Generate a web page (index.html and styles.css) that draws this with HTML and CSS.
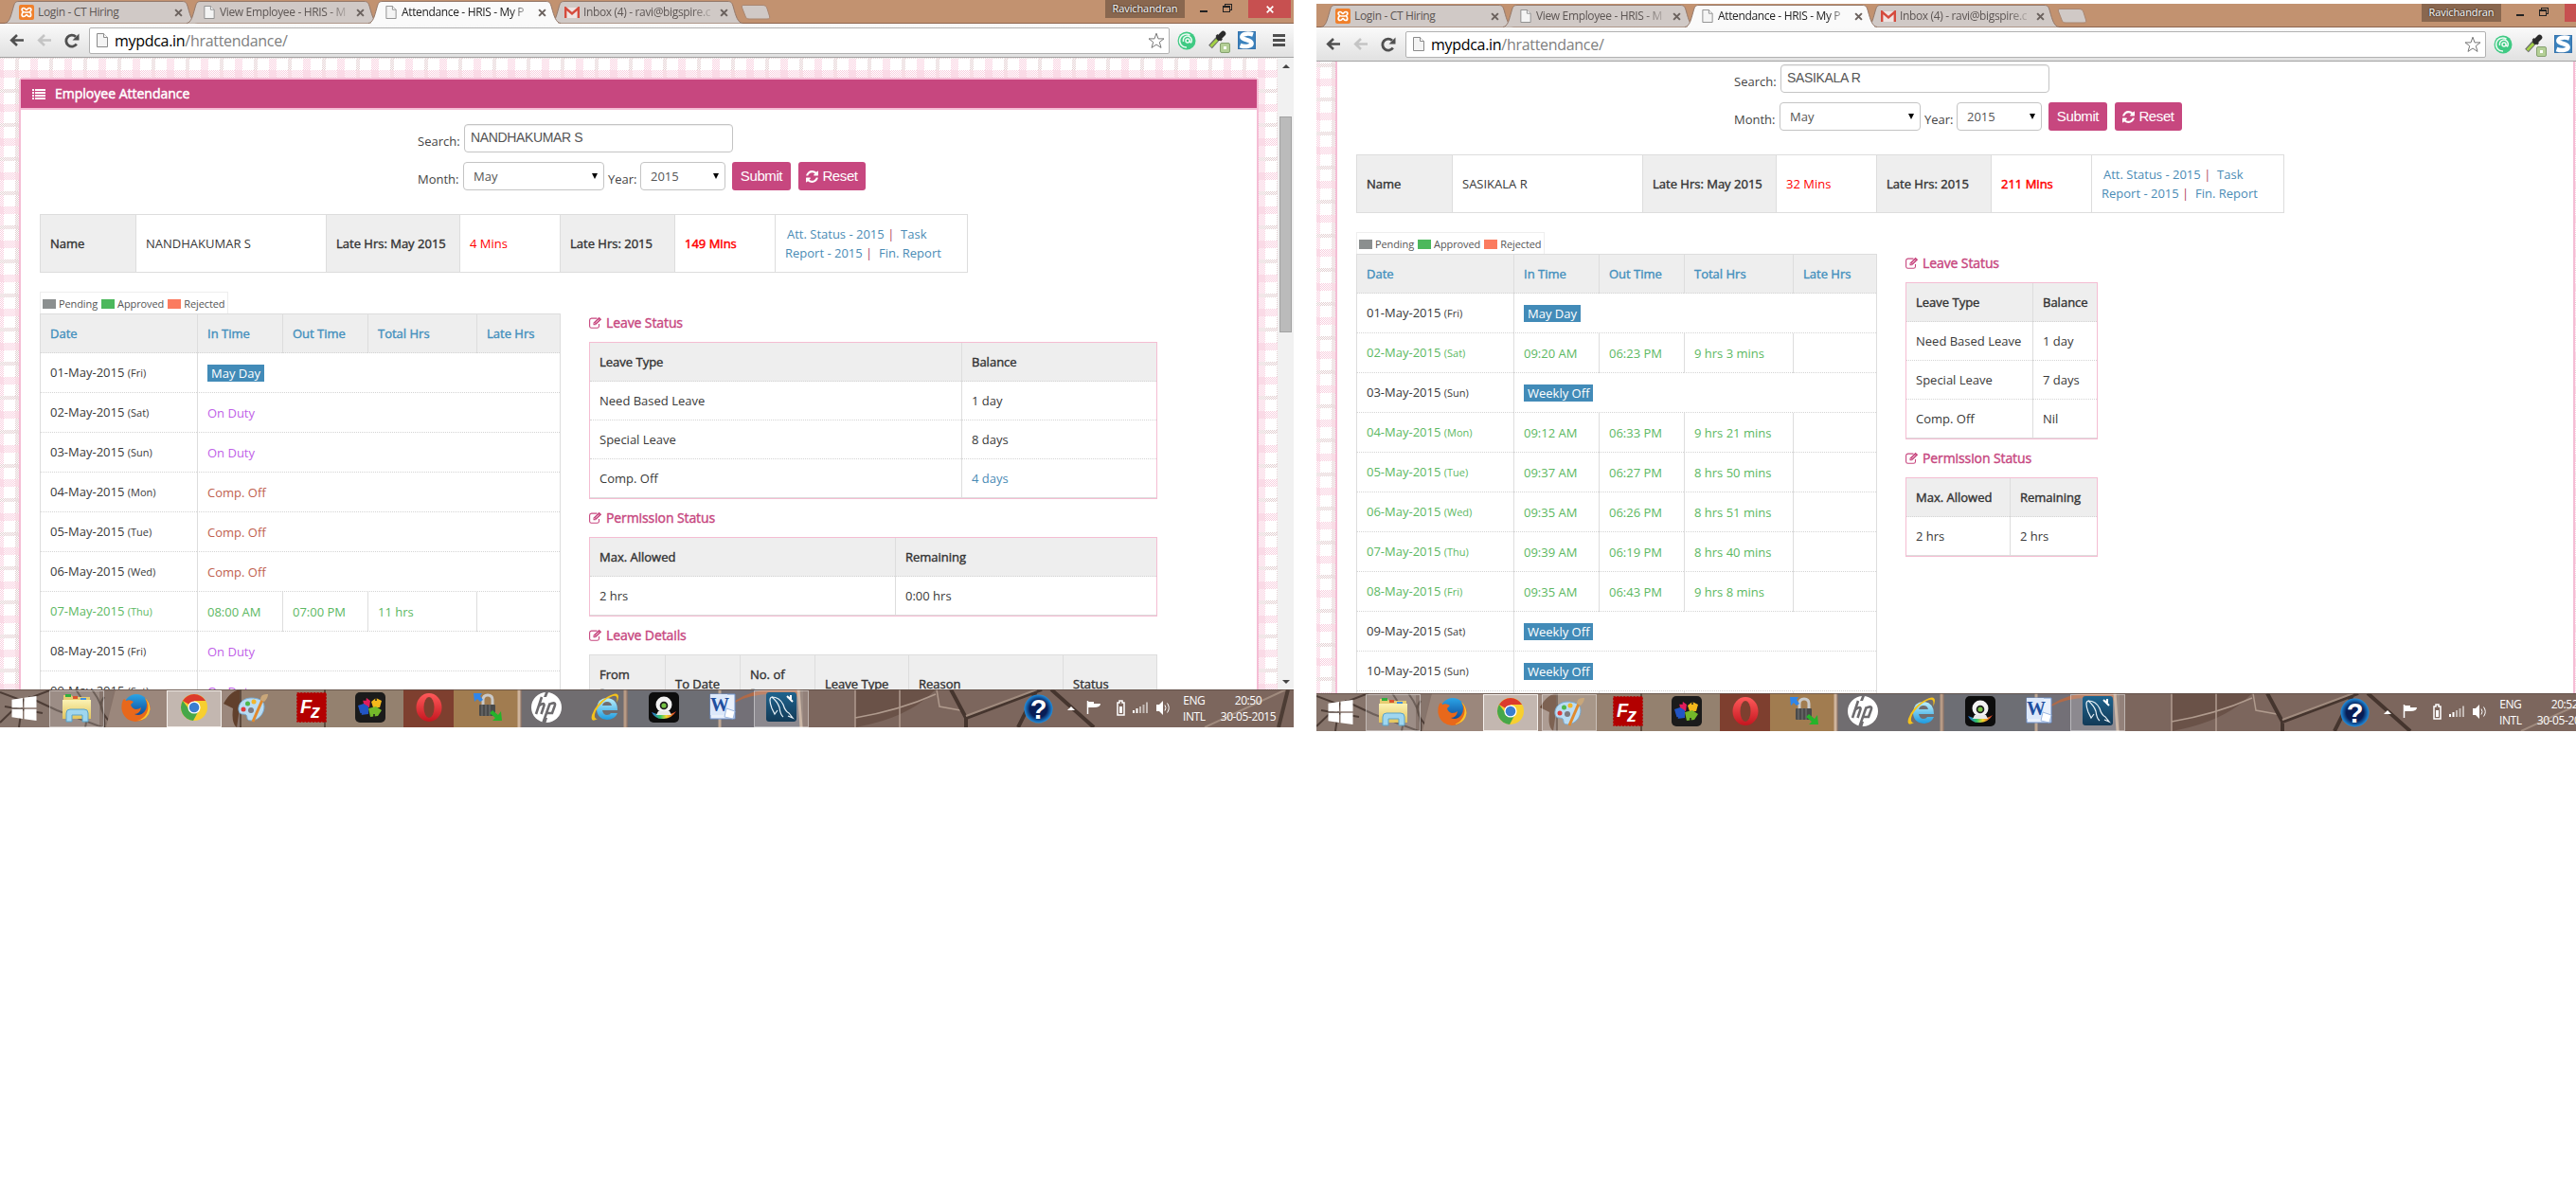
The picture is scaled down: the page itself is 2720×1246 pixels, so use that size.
FILE: index.html
```html
<!DOCTYPE html>
<html lang="en">
<head>
<meta charset="utf-8">
<title>Attendance - HRIS</title>
<link rel="stylesheet" href="styles.css">
</head>
<body>
<svg class="defs" width="0" height="0" aria-hidden="true">
  <defs>
    <pattern id="dotPink" width="2" height="2" patternUnits="userSpaceOnUse"><path d="M0 0h1v1H0zM1 1h1v1H1z" fill="#f9cfdf"/></pattern>
    <pattern id="dotGray" width="2" height="2" patternUnits="userSpaceOnUse"><path d="M0 0h1v1H0zM1 1h1v1H1z" fill="#e3cfd1"/></pattern>
    <pattern id="gingham" width="36" height="36" patternUnits="userSpaceOnUse">
      <rect width="36" height="36" fill="#fff"/>
      <path d="M0 0h4v36H0zM32 0h4v36h-4zM0 13h36v8H0z" fill="url(#dotPink)"/>
      <path d="M16 0h4v36h-4zM0 33h36v3H0zM0 0h36v1H0z" fill="url(#dotGray)"/>
      <path d="M0 13h4v8H0zM32 13h4v8h-4z" fill="#fadae6"/>
      <path d="M16 13h4v8h-4z" fill="#f8dde5"/>
      <path d="M16 33h4v3h-4zM16 0h4v1h-4z" fill="#ecdfe0"/>
    </pattern>
    <linearGradient id="gBlue" x2="0" y2="1"><stop offset="0" stop-color="#2aa5e8"/><stop offset="1" stop-color="#0b3c8c"/></linearGradient>
    <linearGradient id="gIe" x2="0" y2="1"><stop offset="0" stop-color="#bdf0fb"/><stop offset="1" stop-color="#1d9be0"/></linearGradient>
    <linearGradient id="gRed" x2="0" y2="1"><stop offset="0" stop-color="#ff5a5a"/><stop offset="1" stop-color="#c4161f"/></linearGradient>
    <linearGradient id="gFold" x2="0" y2="1"><stop offset="0" stop-color="#fbf2b4"/><stop offset="1" stop-color="#e3c55c"/></linearGradient>
    <linearGradient id="gRain" x2="1" y2="0"><stop offset="0" stop-color="#2c6be0"/><stop offset=".35" stop-color="#2fc46a"/><stop offset=".6" stop-color="#f3d52b"/><stop offset="1" stop-color="#e0302a"/></linearGradient>
    <linearGradient id="gSql" x2="0" y2="1"><stop offset="0" stop-color="#1f648e"/><stop offset="1" stop-color="#123a57"/></linearGradient>
    <radialGradient id="gHelp"><stop offset=".6" stop-color="#081d55"/><stop offset="1" stop-color="#1f8ee0"/></radialGradient>
  </defs>
  <symbol id="tab" viewBox="0 0 203 25"><path d="M0 24.5C5 24 6.500 17 9 8 10.500 2.500 11.500 1.500 15 1.500H187C191 1.500 192 2.500 193.500 8 196 17 198 24 203 24.500" stroke="#94796b"/></symbol>
  <symbol id="newtab" viewBox="0 0 32 16"><path d="M3 .5H23C26 .5 27 1.500 28 4L30.500 12C31 14 30.500 15 28 15H9C7 15 5.500 14 5 12L1.500 3C1 1.500 1.500 .5 3 .5z" fill="#d0c9c6" stroke="#a98671"/></symbol>
  <symbol id="doc" viewBox="0 0 12 15"><path d="M.5.500H7.500L11.500 4.500V14.500H.5z" fill="#f4f4f4" stroke="#8b8b8b"/><path d="M7.500.500V4.500H11.500" fill="#fff" stroke="#8b8b8b"/></symbol>
  <symbol id="xampp" viewBox="0 0 16 16"><rect width="16" height="16" rx="2" fill="#f0802b"/><path d="M5 3.500C2.500 3.500 2.500 7 5 7.800 2.500 8.800 2.500 12.500 5 12.500S7 10.500 8 10.500 9 12.500 11 12.500 13.500 9 11 7.800C13.500 7 13.500 3.500 11 3.500S9 5.500 8 5.500 7 3.500 5 3.500zM6 8h4" fill="none" stroke="#fff" stroke-width="1.700"/></symbol>
  <symbol id="gmail" viewBox="0 0 16 12"><path d="M0 1h16v11H0z" fill="#efe3e1"/><path d="M1.200 12V1.500L8 7.500 14.800 1.500V12" fill="none" stroke="#d54b3d" stroke-width="2.400"/></symbol>
  <symbol id="x" viewBox="0 0 8 8"><path d="M1 1L7 7M7 1L1 7" stroke="#6b625e" stroke-width="1.800"/></symbol>
  <symbol id="arrow" viewBox="0 0 15 13"><path d="M15 6.500H3M8 1L2.200 6.500 8 12" fill="none" stroke="currentColor" stroke-width="2.600"/></symbol>
  <symbol id="reload" viewBox="0 0 16 16"><path d="M12.800 11.500A6 6 0 1 1 12 3.800" fill="none" stroke="#505050" stroke-width="2.800"/><path d="M15.500.500V7.500H8.500z" fill="#505050"/></symbol>
  <symbol id="star" viewBox="0 0 18 18"><path d="M9 1.200L11 6.900H17L12.300 10.500 14 16.400 9 13 4 16.400 5.700 10.500 1 6.900H7z" fill="#fff" stroke="#777" stroke-linejoin="round"/></symbol>
  <symbol id="at" viewBox="0 0 20 20"><circle cx="10" cy="10" r="9.500" fill="#3fca83"/><path d="M10 17A7 7 0 1 1 13.500 4.200M9 10a2 2 0 1 0 4 0 2 2 0 0 0-4 0M13 10c2 5 3-1 1.500-3C11 3 5.500 6 6.500 11" fill="none" stroke="#fff" stroke-width="1.500" opacity=".9"/></symbol>
  <symbol id="dropper" viewBox="0 0 24 24"><path d="M2 17.500L11 7.500" stroke="#6b6b6b" stroke-width="5"/><path d="M2.500 17L10.500 8.500" stroke="#a4d246" stroke-width="2.800"/><path d="M8.500 5L14 10.500" stroke="#333" stroke-width="2.600"/><path d="M11 8L15.500 3.500" stroke="#2b2b2b" stroke-width="5.500" stroke-linecap="round"/><rect x="12.500" y="13.500" width="10" height="10" rx="1.500" fill="#b4cf96" stroke="#86a170"/><rect x="16" y="17" width="3" height="3" fill="#fff"/></symbol>
  <symbol id="s" viewBox="0 0 19 19"><rect x=".5" y=".5" width="18" height="18" fill="#3b82bd" stroke="#3573ad"/><path d="M16 3.500C10 1.500 3.500 3 4.500 6.500 5.500 9.500 14 8.500 14.500 12.500 15 16 8 17 2.500 15" fill="none" stroke="#fff" stroke-width="4.600"/></symbol>
  <symbol id="list" viewBox="0 0 14 11"><path d="M0 0h2v2H0zM3 0h11v2H3zM0 3h2v2H0zM3 3h11v2H3zM0 6h2v2H0zM3 6h11v2H3zM0 9h2v2H0zM3 9h11v2H3z" fill="#fff"/></symbol>
  <symbol id="refresh" viewBox="0 0 1536 1536"><path fill="#fff" d="M1511 928q0 5-1 7-64 268-268 434.500T764 1536q-146 0-282.500-55T238 1324l-129 129q-19 19-45 19t-45-19-19-45V960q0-26 19-45t45-19h448q26 0 45 19t19 45-19 45l-137 137q71 66 161 102t187 36q134 0 250-65t186-179q11-17 53-117 8-23 30-23h192q13 0 22.500 9.500t9.500 22.500zm25-800v448q0 26-19 45t-45 19h-448q-26 0-45-19t-19-45 19-45l138-138Q969 256 768 256q-134 0-250 65T332 500q-11 17-53 117-8 23-30 23H50q-13 0-22.500-9.500T18 608v-7q65-268 270-434.500T768 0q146 0 284 55.500T1297 212l130-129q19-19 45-19t45 19 19 45z"/></symbol>
  <symbol id="edit" viewBox="0 0 14 13"><path d="M10.500 8V10.500A2 2 0 0 1 8.500 12.300H2.500A2 2 0 0 1 .6 10.500V4A2 2 0 0 1 2.500 2.100H8.500" fill="none" stroke="#c7477f" stroke-width="1.100"/><path d="M4.500 9.300V6.800L10.600.7 13.200 3.200 7 9.300z" fill="#c7477f"/><path d="M5.500 7.200L6.700 8.400M7 6.800L10.300 3.500" stroke="#fff" stroke-width=".8"/></symbol>
  <symbol id="wall" viewBox="0 0 1366 40">
    <rect width="1366" height="40" fill="#87736a"/>
    <path d="M0 0H120L112 40H0z" fill="#87756c"/>
    <path d="M0 3L24 12 55 0M0 35L24 12 20 40M30 8L60 22 108 40M5 18L45 25M80 0Q95 20 90 40M97 0Q112 20 110 40M110 8Q100 20 120 38" fill="none" stroke="#4d3d36" stroke-width="2"/>
    <path d="M122 0H250V40H112z" fill="#9b877c"/><path d="M236 15Q244 0 256 0L250 40Q244 36 246 20z" fill="#61402c"/>
    <path d="M254 0H342V40H254z" fill="#95806f"/><path d="M344 0H426V40H344z" fill="#94816f"/><path d="M254 0V40M343 0V40" stroke="#5e4a3c" stroke-width="2"/>
    <path d="M426 0H479V40H426z" fill="#7e3f2f"/><path d="M479 0H548V40H479z" fill="#a17c50"/><path d="M548 0V40" stroke="#cfb49c" stroke-width="3"/>
    <path d="M551 0H660V40H551z" fill="#706d70"/><path d="M660 0V40" stroke="#b89b85" stroke-width="3"/><path d="M663 0H775V40H663z" fill="#6d6e74"/>
    <path d="M760 0H845V40H760z" fill="#737077"/><path d="M776 12Q795 0 815 0H845V8Q800 0 776 14z" fill="#b06a48"/><path d="M760 0V40M843 0L846 40" stroke="#c0a894" stroke-width="3"/>
    <path d="M848 0H1366V40H848z" fill="#7c665d"/><path d="M903 0H988Q960 30 903 40z" fill="#6a5248"/>
    <path d="M903 0V40M950 0V40M989 0L992 18 1014 22M903 30Q950 22 988 5" fill="none" stroke="#b09b8e" stroke-width="1.500"/>
    <path d="M1004 0L1020 30 1100 0M1020 30V40M1075 40L1095 0M1110 0L1155 40" fill="none" stroke="#45352e" stroke-width="4"/><path d="M1020 28L1095 0M1272 40L1358 0" fill="none" stroke="#a08b7e" stroke-width="2"/><path d="M1360 0L1350 40" stroke="#4c3c34" stroke-width="4"/>
    <path d="M0 .5H1366" stroke="#5b4a42" opacity=".7"/>
  </symbol>
  <symbol id="win" viewBox="0 0 26 26"><path d="M0 3.800L11.500 2V12.300H0zM13 1.800L26 0V12.300H13zM0 13.700H11.500V24L0 22.200zM13 13.700H26V26L13 24.200z" fill="#fff"/></symbol>
  <symbol id="i-explorer" viewBox="0 0 32 32"><path d="M2 3h8l2 2h18v22H2z" fill="#e6cd72"/><path d="M4 2h6v3H4z" fill="#2fae3e"/><path d="M12 4h5v3h-5z" fill="#d9542e"/><path d="M20 6h6v3h-6z" fill="#3f8fe0"/><path d="M1 8h30v20H1z" fill="url(#gFold)"/><path d="M5 31V22Q5 18 9 18H24Q28 18 28 22V31H22V24H11V31z" fill="#9fd6ef" stroke="#5aa3c9"/></symbol>
  <symbol id="i-firefox" viewBox="0 0 32 32"><circle cx="17" cy="15" r="13" fill="url(#gBlue)"/><path d="M3 8Q5 6 6 9 10 7 14 10L11 13Q12 17 16 18 20 18 22 16 21 23 15 23 21 26 26 20 30 14 26 6 33 12 31 20 27 31 16 31 4 30 1.500 18 1 12 3 8z" fill="#e8681b"/><path d="M26 6Q32 14 28 22 25 28 18 30 30 29 31.500 18 31 10 26 6z" fill="#f9c42e"/></symbol>
  <symbol id="i-chrome" viewBox="0 0 32 32"><circle cx="16" cy="16" r="14" fill="#f7cf2f"/><path d="M16 16L3.900 9A14 14 0 0 1 28.100 9H16z" fill="#dc3b2c"/><path d="M3.900 9A14 14 0 0 0 15 30L21 19 10 17z" fill="#46a749"/><circle cx="16" cy="16" r="6.600" fill="#fff"/><circle cx="16" cy="16" r="5.300" fill="#3b7ed0"/></symbol>
  <symbol id="i-paint" viewBox="0 0 32 32"><path d="M14 6C5 6 0 13 1 19S7 22 9 24 8 30 15 30C23 29 28 22 28 15S21 6 14 6z" fill="#b9dcf3" stroke="#78a9cf"/><circle cx="6" cy="18" r="2.500" fill="#e03a3a"/><circle cx="10.500" cy="12" r="2.500" fill="#4cb84b"/><circle cx="17" cy="10" r="2.500" fill="#f2b62b"/><circle cx="14" cy="19" r="3" fill="#7c7a80"/><path d="M26 8L16 31" stroke="#e08a2e" stroke-width="3"/><path d="M24 8Q24 1 32 2 32 6 28 10z" fill="#c9a77a"/></symbol>
  <symbol id="i-fz" viewBox="0 0 32 32"><rect x=".7" y=".7" width="30.600" height="30.600" fill="#b30000" stroke="#b30000" stroke-dasharray="2 1.500"/><text x="4" y="22" class="fz">F</text><text x="15" y="27" class="fz">z</text></symbol>
  <symbol id="i-puzzle" viewBox="0 0 32 32"><rect width="32" height="32" rx="5" fill="#1b1b1b"/><path d="M8 8l4-2 4 3-1 7-5 0z" fill="#e11d5b"/><path d="M17 10l5-4 6 3-2 7-7 0z" fill="#f5b81b"/><path d="M3 14l6-2 5 3 0 8-8 1z" fill="#2255c4"/><path d="M14 17l8-2 6 4-4 6-8 1z" fill="#74b82a"/><path d="M8 8h3v-2M22 9v-3M6 24v-2M20 26v-3" stroke="#1b1b1b" stroke-width="1.500"/></symbol>
  <symbol id="i-opera" viewBox="0 0 32 32"><ellipse cx="16" cy="16" rx="13.500" ry="15" fill="url(#gRed)"/><ellipse cx="16" cy="16" rx="5.500" ry="11" fill="#7e3f2f"/></symbol>
  <symbol id="i-lock" viewBox="0 0 32 32"><path d="M11 14V8Q11 3 16 3T21 8V14" fill="none" stroke="#c9c9c9" stroke-width="3"/><rect x="7" y="13" width="17" height="12" rx="1" fill="#4a4a4a"/><path d="M10 13v12M14 13v12M18 13v12" stroke="#777"/><path d="M1 1H10L8 4 11 8 8 10 5 7 2 10z" fill="#2f86ea"/><path d="M31 30H21L24 27 18 22 21 19 27 24 30 20z" fill="#25b32a"/></symbol>
  <symbol id="i-hp" viewBox="0 0 32 32"><circle cx="16" cy="16" r="16" fill="#fff"/><path d="M11 5L5 23M8.500 14Q14 10 13.500 14L10.500 23M19.500 12L12.500 32M18.500 13Q27 9 24.500 15L22 22H17" fill="none" stroke="#6d6b6e" stroke-width="2.600"/><path d="M15 0h3l-2 5h-3zM14.500 27h2.500l-1.500 5h-3z" fill="#6d6b6e"/></symbol>
  <symbol id="i-ie" viewBox="0 0 32 32"><path d="M29 22Q26 29 18 29 7 28 7 17 8 6 18 6 29 7 29 19H13Q14 24 18 24 21 24 22 22zM13 14H23Q22 10 18 10 14 10 13 14z" fill="url(#gIe)" fill-rule="evenodd"/><path d="M8 28Q0 33 2 24 6 12 18 5 30-2 30 5 30 8 28 11 30 2 24 4 13 8 6 20 3 28 8 28z" fill="#f5c21b"/></symbol>
  <symbol id="i-cam" viewBox="0 0 32 32"><rect width="32" height="32" rx="5" fill="#0d0d0d"/><path d="M3 21Q7 29 16 28T29 20Q23 24 16 24T3 21z" fill="url(#gRain)"/><circle cx="16" cy="13" r="8.500" fill="#f3f3f3"/><path d="M10 20h12l2 4H8z" fill="#e8e8e8"/><circle cx="16" cy="14" r="4.300" fill="#1d1d1d"/><circle cx="16" cy="14" r="2.600" fill="#74c244"/></symbol>
  <symbol id="i-word" viewBox="0 0 32 32"><path d="M3 2h26v26H3z" fill="#e9f0fb" stroke="#6f93cf"/><path d="M3 2h18v22H3z" fill="#dce8fa"/><text x="3" y="20" class="word">W</text><path d="M20 17l9 3-2 8-9-2z" fill="#fff" stroke="#9db7e0"/></symbol>
  <symbol id="i-sql" viewBox="0 0 32 32"><rect width="32" height="31" rx="3" fill="url(#gSql)"/><path d="M6 17Q2 6 6 5 14 5 18 13 20 20 24 22L28 27 23 25M6 17L9 23 12 19M6 5Q12 10 14 16 15 24 18 26" fill="none" stroke="#e8f1f7" stroke-width="1.200"/><path d="M22 4l3 3 3 3M26 3v4M22 5l4 1" stroke="#fff" stroke-width="2"/></symbol>
  <symbol id="i-help" viewBox="0 0 32 32"><circle cx="16" cy="16" r="15.500" fill="url(#gHelp)"/><text x="16" y="27" class="q">?</text></symbol>
  <symbol id="tray" viewBox="0 0 110 20"><path d="M1 12L5 8 9 12z" fill="#fff"/><path d="M22.500 2V16" stroke="#fff" stroke-width="1.500"/><path d="M23 3h6v2h7q0 4-7 4h-6z" fill="#fff"/><path d="M56 2h3v2h2v13h-7V4h2z" fill="none" stroke="#fff" stroke-width="1.500"/><path d="M56 8h3v7h-3z" fill="#fff"/><path d="M70 12h2v3h-2zM73.500 10h2v5h-2z" fill="#fff"/><path d="M77 8h2v7h-2zM80.500 6h2v9h-2zM84 3.500h2v11.500h-2z" fill="#c4bab5"/><path d="M95 6h3l4-4v15l-4-4h-3z" fill="#fff"/><path d="M104 6.500q2 3 0 6M106.500 4.500q3.500 5 0 10" fill="none" stroke="#fff"/></symbol>
</svg>

<main class="desk">
<section class="window">
  <header class="tabs">
    <div class="tab"><svg class="shape"><use href="#tab"/></svg><svg class="fav"><use href="#xampp"/></svg><span>Login - CT Hiring</span><svg class="close"><use href="#x"/></svg></div>
    <div class="tab"><svg class="shape"><use href="#tab"/></svg><svg class="fav page-ic"><use href="#doc"/></svg><span class="fade">View Employee - HRIS - M</span><svg class="close"><use href="#x"/></svg></div>
    <div class="tab active"><svg class="shape"><use href="#tab"/></svg><svg class="fav page-ic"><use href="#doc"/></svg><span class="fade">Attendance - HRIS - My P</span><svg class="close"><use href="#x"/></svg></div>
    <div class="tab"><svg class="shape"><use href="#tab"/></svg><svg class="fav mail"><use href="#gmail"/></svg><span class="fade">Inbox (4) - ravi@bigspire.c</span><svg class="close"><use href="#x"/></svg></div>
    <svg class="newtab"><use href="#newtab"/></svg>
    <div class="user">Ravichandran</div><i class="min"></i><i class="restore"></i><div class="quit"><svg viewBox="0 0 8 8"><path d="M.7.7L7.300 7.300M7.300.7L.7 7.300" stroke="#fff" stroke-width="1.700"/></svg></div>
  </header>
  <nav class="toolbar">
    <svg class="nav back"><use href="#arrow"/></svg><svg class="nav fwd"><use href="#arrow"/></svg><svg class="reload"><use href="#reload"/></svg>
    <div class="omni"><svg class="omnidoc"><use href="#doc"/></svg><span><b>mypdca.in</b>/hrattendance/</span><svg class="star"><use href="#star"/></svg></div>
    <svg class="ext at"><use href="#at"/></svg><svg class="ext drop"><use href="#dropper"/></svg><svg class="ext s"><use href="#s"/></svg><i class="menu"></i>
  </nav>
  <div class="view">
    <div class="page">
      <svg class="gingham" width="1349" height="800"><rect width="1349" height="800" fill="url(#gingham)"/></svg>
      <div class="panel">
        <h1><svg><use href="#list"/></svg><span>Employee Attendance</span></h1>
        <form class="filter">
          <div class="line"><label class="l1">Search:</label><div class="input">NANDHAKUMAR S</div></div>
          <div class="line"><label class="l2">Month:</label><div class="select month">May</div><label class="l3">Year:</label><div class="select year">2015</div><div class="btn submit">Submit</div><div class="btn reset"><svg><use href="#refresh"/></svg>Reset</div></div>
        </form>
        <div class="info"><div class="k c1">Name</div><div class="c2">NANDHAKUMAR S</div><div class="k c3">Late Hrs: May 2015</div><div class="c4 red">4 Mins</div><div class="k c5">Late Hrs: 2015</div><div class="c6 red strong">149 Mins</div><div class="c7"><p><a>Att. Status - 2015</a> <em>|</em> &nbsp;<a>Task</a></p><p><a>Report - 2015</a> <em>|</em> &nbsp;<a>Fin. Report</a></p></div></div>
        <div class="cols">
          <div class="left">
            <div class="legend"><i class="pend"></i>Pending<i class="appr"></i>Approved<i class="rej"></i>Rejected</div>
            <table class="att">
              <colgroup><col class="a1"><col class="a2"><col class="a2"><col class="a3"><col class="a4"></colgroup>
              <tr><th>Date</th><th>In Time</th><th>Out Time</th><th>Total Hrs</th><th>Late Hrs</th></tr>
              <tr><td>01-May-2015 <small>(Fri)</small></td><td colspan="4"><mark>May Day</mark></td></tr>
              <tr><td>02-May-2015 <small>(Sat)</small></td><td colspan="4" class="duty">On Duty</td></tr>
              <tr><td>03-May-2015 <small>(Sun)</small></td><td colspan="4" class="duty">On Duty</td></tr>
              <tr><td>04-May-2015 <small>(Mon)</small></td><td colspan="4" class="comp">Comp. Off</td></tr>
              <tr><td>05-May-2015 <small>(Tue)</small></td><td colspan="4" class="comp">Comp. Off</td></tr>
              <tr><td>06-May-2015 <small>(Wed)</small></td><td colspan="4" class="comp">Comp. Off</td></tr>
              <tr class="ok"><td>07-May-2015 <small>(Thu)</small></td><td>08:00 AM</td><td>07:00 PM</td><td>11 hrs</td><td></td></tr>
              <tr><td>08-May-2015 <small>(Fri)</small></td><td colspan="4" class="duty">On Duty</td></tr>
              <tr><td>09-May-2015 <small>(Sat)</small></td><td colspan="4" class="duty">On Duty</td></tr>
            </table>
          </div>
          <div class="right">
            <h2><svg><use href="#edit"/></svg>Leave Status</h2>
            <table class="box wide"><colgroup><col class="w1"><col></colgroup>
              <tr><th>Leave Type</th><th>Balance</th></tr>
              <tr><td>Need Based Leave</td><td>1 day</td></tr>
              <tr><td>Special Leave</td><td>8 days</td></tr>
              <tr><td>Comp. Off</td><td><a>4 days</a></td></tr>
            </table>
            <h2><svg><use href="#edit"/></svg>Permission Status</h2>
            <table class="box wide"><colgroup><col class="w2"><col></colgroup>
              <tr><th>Max. Allowed</th><th>Remaining</th></tr>
              <tr><td>2 hrs</td><td>0:00 hrs</td></tr>
            </table>
            <h2><svg><use href="#edit"/></svg>Leave Details</h2>
            <table class="box wide details"><colgroup><col class="d1"><col class="d1"><col class="d1"><col class="d2"><col class="d3"><col></colgroup>
              <tr><th>From<br>Date</th><th>To Date</th><th>No. of<br>Days</th><th>Leave Type</th><th>Reason</th><th>Status</th></tr>
            </table>
          </div>
        </div>
      </div>
    </div>
    <div class="scroll"><i class="up"></i><i class="thumb"></i><i class="down"></i></div>
  </div>
  <footer class="taskbar">
    <svg class="wall"><use href="#wall"/></svg>
    <svg class="start"><use href="#win"/></svg>
    <div class="app open stack"><svg><use href="#i-explorer"/></svg></div><div class="app"><svg><use href="#i-firefox"/></svg></div><div class="app open current"><svg><use href="#i-chrome"/></svg></div><div class="app"><svg><use href="#i-paint"/></svg></div><div class="app"><svg><use href="#i-fz"/></svg></div><div class="app"><svg><use href="#i-puzzle"/></svg></div><div class="app"><svg><use href="#i-opera"/></svg></div><div class="app"><svg><use href="#i-lock"/></svg></div><div class="app"><svg><use href="#i-hp"/></svg></div><div class="app"><svg><use href="#i-ie"/></svg></div><div class="app"><svg><use href="#i-cam"/></svg></div><div class="app"><svg><use href="#i-word"/></svg></div><div class="app open"><svg><use href="#i-sql"/></svg></div>
    <svg class="help"><use href="#i-help"/></svg><svg class="tray"><use href="#tray"/></svg>
    <div class="lang"><span>ENG</span><span>INTL</span></div><div class="clock"><span>20:50</span><span>30-05-2015</span></div>
  </footer>
</section>

<section class="window second">
  <header class="tabs">
    <div class="tab"><svg class="shape"><use href="#tab"/></svg><svg class="fav"><use href="#xampp"/></svg><span>Login - CT Hiring</span><svg class="close"><use href="#x"/></svg></div>
    <div class="tab"><svg class="shape"><use href="#tab"/></svg><svg class="fav page-ic"><use href="#doc"/></svg><span class="fade">View Employee - HRIS - M</span><svg class="close"><use href="#x"/></svg></div>
    <div class="tab active"><svg class="shape"><use href="#tab"/></svg><svg class="fav page-ic"><use href="#doc"/></svg><span class="fade">Attendance - HRIS - My P</span><svg class="close"><use href="#x"/></svg></div>
    <div class="tab"><svg class="shape"><use href="#tab"/></svg><svg class="fav mail"><use href="#gmail"/></svg><span class="fade">Inbox (4) - ravi@bigspire.c</span><svg class="close"><use href="#x"/></svg></div>
    <svg class="newtab"><use href="#newtab"/></svg>
    <div class="user">Ravichandran</div><i class="min"></i><i class="restore"></i><div class="quit"></div>
  </header>
  <nav class="toolbar">
    <svg class="nav back"><use href="#arrow"/></svg><svg class="nav fwd"><use href="#arrow"/></svg><svg class="reload"><use href="#reload"/></svg>
    <div class="omni"><svg class="omnidoc"><use href="#doc"/></svg><span><b>mypdca.in</b>/hrattendance/</span><svg class="star"><use href="#star"/></svg></div>
    <svg class="ext at"><use href="#at"/></svg><svg class="ext drop"><use href="#dropper"/></svg><svg class="ext s"><use href="#s"/></svg><i class="menu"></i>
  </nav>
  <div class="view">
    <div class="page scrolled">
      <svg class="gingham" width="1349" height="800"><rect width="1349" height="800" fill="url(#gingham)"/></svg>
      <div class="panel">
        <h1></h1>
        <form class="filter">
          <div class="line"><label class="l1">Search:</label><div class="input">SASIKALA R</div></div>
          <div class="line"><label class="l2">Month:</label><div class="select month">May</div><label class="l3">Year:</label><div class="select year">2015</div><div class="btn submit">Submit</div><div class="btn reset"><svg><use href="#refresh"/></svg>Reset</div></div>
        </form>
        <div class="info"><div class="k c1">Name</div><div class="c2">SASIKALA R</div><div class="k c3">Late Hrs: May 2015</div><div class="c4 red">32 Mins</div><div class="k c5">Late Hrs: 2015</div><div class="c6 red strong">211 Mins</div><div class="c7"><p><a>Att. Status - 2015</a> <em>|</em> &nbsp;<a>Task</a></p><p><a>Report - 2015</a> <em>|</em> &nbsp;<a>Fin. Report</a></p></div></div>
        <div class="cols">
          <div class="left">
            <div class="legend"><i class="pend"></i>Pending<i class="appr"></i>Approved<i class="rej"></i>Rejected</div>
            <table class="att">
              <colgroup><col class="a1"><col class="a2"><col class="a2"><col class="a3"><col class="a4"></colgroup>
              <tr><th>Date</th><th>In Time</th><th>Out Time</th><th>Total Hrs</th><th>Late Hrs</th></tr>
              <tr><td>01-May-2015 <small>(Fri)</small></td><td colspan="4"><mark>May Day</mark></td></tr>
              <tr class="ok"><td>02-May-2015 <small>(Sat)</small></td><td>09:20 AM</td><td>06:23 PM</td><td>9 hrs 3 mins</td><td></td></tr>
              <tr><td>03-May-2015 <small>(Sun)</small></td><td colspan="4"><mark>Weekly Off</mark></td></tr>
              <tr class="ok"><td>04-May-2015 <small>(Mon)</small></td><td>09:12 AM</td><td>06:33 PM</td><td>9 hrs 21 mins</td><td></td></tr>
              <tr class="ok"><td>05-May-2015 <small>(Tue)</small></td><td>09:37 AM</td><td>06:27 PM</td><td>8 hrs 50 mins</td><td></td></tr>
              <tr class="ok"><td>06-May-2015 <small>(Wed)</small></td><td>09:35 AM</td><td>06:26 PM</td><td>8 hrs 51 mins</td><td></td></tr>
              <tr class="ok"><td>07-May-2015 <small>(Thu)</small></td><td>09:39 AM</td><td>06:19 PM</td><td>8 hrs 40 mins</td><td></td></tr>
              <tr class="ok"><td>08-May-2015 <small>(Fri)</small></td><td>09:35 AM</td><td>06:43 PM</td><td>9 hrs 8 mins</td><td></td></tr>
              <tr><td>09-May-2015 <small>(Sat)</small></td><td colspan="4"><mark>Weekly Off</mark></td></tr>
              <tr><td>10-May-2015 <small>(Sun)</small></td><td colspan="4"><mark>Weekly Off</mark></td></tr>
              <tr><td></td><td></td><td></td><td></td><td></td></tr>
            </table>
          </div>
          <div class="right">
            <h2><svg><use href="#edit"/></svg>Leave Status</h2>
            <table class="box narrow"><colgroup><col class="n1"><col></colgroup>
              <tr><th>Leave Type</th><th>Balance</th></tr>
              <tr><td>Need Based Leave</td><td>1 day</td></tr>
              <tr><td>Special Leave</td><td>7 days</td></tr>
              <tr><td>Comp. Off</td><td>Nil</td></tr>
            </table>
            <h2><svg><use href="#edit"/></svg>Permission Status</h2>
            <table class="box narrow"><colgroup><col class="n2"><col></colgroup>
              <tr><th>Max. Allowed</th><th>Remaining</th></tr>
              <tr><td>2 hrs</td><td>2 hrs</td></tr>
            </table>
          </div>
        </div>
      </div>
    </div>
  </div>
  <footer class="taskbar">
    <svg class="wall"><use href="#wall"/></svg>
    <svg class="start"><use href="#win"/></svg>
    <div class="app open stack"><svg><use href="#i-explorer"/></svg></div><div class="app"><svg><use href="#i-firefox"/></svg></div><div class="app open current"><svg><use href="#i-chrome"/></svg></div><div class="app open"><svg><use href="#i-paint"/></svg></div><div class="app"><svg><use href="#i-fz"/></svg></div><div class="app"><svg><use href="#i-puzzle"/></svg></div><div class="app"><svg><use href="#i-opera"/></svg></div><div class="app"><svg><use href="#i-lock"/></svg></div><div class="app"><svg><use href="#i-hp"/></svg></div><div class="app"><svg><use href="#i-ie"/></svg></div><div class="app"><svg><use href="#i-cam"/></svg></div><div class="app"><svg><use href="#i-word"/></svg></div><div class="app open"><svg><use href="#i-sql"/></svg></div>
    <svg class="help"><use href="#i-help"/></svg><svg class="tray"><use href="#tray"/></svg>
    <div class="lang"><span>ENG</span><span>INTL</span></div><div class="clock"><span>20:52</span><span>30-05-2015</span></div>
  </footer>
</section>
</main>
</body>
</html>
```
FILE: styles.css
```css
* { box-sizing: border-box; }
body { margin: 0; background: #fff; font: 13px/20px "Open Sans", "Noto Sans", sans-serif; color: #393939; width: 2720px; height: 1246px; overflow: hidden; }
svg { display: block; flex: none; }
i { flex: none; }
.defs { position: absolute; }
.desk { display: flex; gap: 24px; align-items: flex-start; width: 2720px; overflow: hidden; }
.window { width: 1366px; height: 768px; flex: none; display: flex; flex-direction: column; overflow: hidden; }
.second { margin-top: 4px; }

/* tab strip */
.tabs { height: 25px; flex: none; background: #c29270; border-bottom: 1px solid #8e6650; display: flex; align-items: flex-start; padding-left: 5px; }
.tab { position: relative; width: 192px; height: 25px; flex: none; display: flex; align-items: center; padding: 1px 0 0 15px; color: #5d5654; }
.tab .shape { position: absolute; left: 0; top: 0; width: 203px; height: 25px; fill: #d0c9c6; }
.tab.active { z-index: 2; color: #222; }
.tab.active .shape { fill: #fafafa; }
.tab.active::after { content: ""; position: absolute; left: 3px; top: 24px; width: 197px; height: 1px; background: #fafafa; }
.tab > * { position: relative; }
.fav { width: 16px; height: 16px; margin-right: 4px; }
.fav.page-ic { width: 12px; height: 14px; margin: 0 5px 0 3px; margin-right: 5px; }
.fav.mail { height: 12px; }
.tab span { font: 12px/20px "Open Sans", sans-serif; letter-spacing: -.35px; width: 140px; height: 20px; overflow: hidden; white-space: nowrap; margin-right: 4px; }
.tab .fade { -webkit-mask-image: linear-gradient(90deg, #000 115px, transparent 140px); mask-image: linear-gradient(90deg, #000 115px, transparent 140px); }
.close { width: 9px; height: 9px; margin-left: auto; position: relative; left: -4px; }
.tabs .newtab { width: 32px; height: 16px; margin: 5px 0 0 9px; }
.user { margin-left: auto; width: 84px; height: 19px; background: #89674f; color: #fff; font: 11px/18px "Open Sans", sans-serif; text-align: center; text-shadow: 0 0 2px #000; letter-spacing: -.1px; }
.min { width: 8px; height: 2px; background: #222; margin: 11px 0 0 16px; }
.restore { position: relative; width: 8px; height: 7px; border: 1px solid #222; border-top-width: 2px; margin: 6px 0 0 16px; box-shadow: 2px -2px 0 -1px #c29270, 2px -2px 0 0 #222; }
.quit { width: 45px; height: 19px; background: #c75050; margin: 0 3px 0 19px; display: flex; align-items: center; justify-content: center; }
.quit svg { width: 8px; height: 8px; }

/* toolbar */
.toolbar { height: 36px; flex: none; background: linear-gradient(#fafafa, #e1e1e1); border-bottom: 1px solid #a3a3a3; display: flex; align-items: center; padding: 0 9px 0 10px; }
.nav { width: 15px; height: 13px; color: #505050; }
.fwd { color: #c4c4c4; margin-left: 14px; }
.reload { width: 16px; height: 16px; margin: 0 10px 0 14px; }
.omni { width: 1141px; height: 28px; background: #fff; border: 1px solid #b1b1b1; border-radius: 2px; display: flex; align-items: center; padding: 0 4px 0 7px; }
.omnidoc { width: 12px; height: 15px; margin-right: 7px; }
.omni span { font: 16px/24px "Open Sans", sans-serif; color: #808080; letter-spacing: -.3px; }
.omni b { font-weight: 400; color: #000; }
.star { width: 18px; height: 18px; margin-left: auto; }
.at { width: 20px; height: 20px; margin-left: 8px; }
.drop { width: 24px; height: 24px; margin: 2px 0 0 13px; }
.s { width: 19px; height: 19px; margin-left: 7px; }
.menu { width: 13px; height: 13px; margin: 0 0 0 auto; border-top: 3px solid #505050; border-bottom: 3px solid #505050; background: linear-gradient(#505050, #505050) center/13px 3px no-repeat; }

/* page */
.view { height: 667px; flex: none; display: flex; align-items: flex-start; overflow: hidden; }
.page { position: relative; width: 1349px; height: 800px; flex: none; padding: 21px 20px 0; }
.scrolled { margin-top: -67px; }
.gingham { position: absolute; left: 0; top: 0; }
.panel { position: relative; width: 1309px; height: 779px; background: #fff; border: 2px solid #f5bdd5; border-radius: 4px 4px 0 0; }
h1 { margin: 0; height: 32px; background: #c7477f; border-bottom: 2px solid #f5bdd5; display: flex; align-items: center; padding: 0 12px; color: #fff; font: 14px/30px "Open Sans", sans-serif; -webkit-text-stroke: .5px #fff; }
h1 svg { width: 14px; height: 11px; margin-right: 10px; }
.filter { padding: 15px 0 0 419px; display: flex; flex-direction: column; gap: 10px; }
.line { display: flex; height: 30px; }
.line label { padding-top: 8px; line-height: 20px; color: #444; white-space: nowrap; }
.l1 { width: 49px; } .l2 { width: 48px; } .l3 { width: 34px; margin-left: 4px; }
.input, .select { border: 1px solid #c4c4c4; border-radius: 4px; font: 14px/28px "Liberation Sans", sans-serif; color: #555; height: 30px; background: #fff; }
.input { width: 284px; padding-left: 6px; line-height: 26px; letter-spacing: -.35px; box-shadow: inset 0 1px 1px #eee; }
.select { position: relative; padding-left: 10px; font: 13px/28px "Open Sans", sans-serif; }
.select::after { content: ""; position: absolute; right: 6px; top: 11px; border: 3.500px solid transparent; border-top: 6px solid #000; border-bottom: 0; }
.month { width: 149px; } .year { width: 90px; }
.btn { background: #c7477f; color: #fff; border-radius: 3px; height: 30px; font: 15px/30px "Liberation Sans", sans-serif; display: flex; align-items: center; justify-content: center; letter-spacing: -.4px; }
.submit { width: 62px; margin: 0 8px 0 7px; } .reset { width: 71px; }
.reset svg { width: 13px; height: 13px; margin-right: 4px; }
.info { margin: 25px 0 0 20px; width: 980px; height: 62px; border: 1px solid #ddd; display: flex; color: #393939; }
.info > div { display: flex; align-items: center; padding-left: 10px; border-left: 1px solid #ddd; flex: none; white-space: nowrap; }
.info > .c1 { width: 100px; border-left: 0; } .c2 { width: 201px; } .c3 { width: 141px; } .c4 { width: 106px; } .c5 { width: 121px; } .c6 { width: 106px; }
.info > .c7 { flex: 1; flex-direction: column; align-items: flex-start; justify-content: center; }
.c7 p { margin: 0; } .c7 p:first-child { padding-left: 2px; } .c7 em { font-style: normal; color: #b0405a; }
.info .k, th { background: #eee; color: #333; font-weight: 400; -webkit-text-stroke: .4px currentColor; }
a { color: #4a8bb5; }
.info .red { color: #f00; } .strong { -webkit-text-stroke: .5px #f00; }
.cols { display: flex; padding-left: 20px; }
.left { width: 550px; padding-top: 20px; }
.legend { width: 199px; height: 23px; border: 1px solid #eee; border-bottom: 0; display: flex; align-items: center; padding: 1px 0 0 2px; font-size: 11px; color: #555; white-space: nowrap; letter-spacing: -.1px; }
.legend i { width: 14px; height: 10px; margin: 0 3px 0 4px; } .legend i:first-child { margin-left: 0; }
.pend { background: #8b8f8f; } .appr { background: #4cb85c; } .rej { background: #fb7b5f; }
table { border-collapse: separate; border-spacing: 0; table-layout: fixed; border: 1px solid #ddd; border-left: 0; border-bottom: 0; }
th, td { height: 42px; padding: 0 0 0 10px; text-align: left; border-left: 1px solid #ddd; border-bottom: 1px dotted #d4d4d4; white-space: nowrap; font-size: 13px; }
.att { width: 550px; }
.att th { height: 41px; color: #4490bd; }
.a1 { width: 166px; } .a2 { width: 90px; } .a3 { width: 115px; }
small { font-size: 11px; }
mark { display: inline-block; background: #428bb8; color: #fff; height: 18px; line-height: 18px; padding: 0 4px; }
.duty { color: #bf5fe8; } .comp { color: #c0604f; } .ok { color: #5cb862; }
.right { margin-left: 30px; padding-top: 33px; }
h2 { margin: 0; height: 40px; display: flex; align-items: center; color: #c7477f; font: 14px/40px "Open Sans", sans-serif; -webkit-text-stroke: .4px #c7477f; letter-spacing: -.1px; }
h2 svg { width: 14px; height: 13px; margin: -2px 4px 0 0; }
.box { border: 1px solid #f4bdd2; }
.box th, .box td { height: 41px; }
.box th:first-child, .box td:first-child { border-left: 0; }
.box tr:last-child td { border-bottom: 1px solid #ddd; }
.wide { width: 600px; } .w1 { width: 392px; } .w2 { width: 322px; }
.narrow { width: 203px; } .n1 { width: 133px; } .n2 { width: 109px; }
.details { border-color: #ddd; } .details th { height: 61px; } .d1 { width: 79px; } .d2 { width: 99px; } .d3 { width: 163px; }
.scroll { position: relative; width: 17px; height: 667px; background: #f1f1f1; display: flex; flex-direction: column; align-items: center; }
.up, .down { border: 4px solid transparent; }
.up { border-bottom-color: #444; margin-top: 3px; } .thumb { width: 13px; height: 228px; margin-top: 51px; background: #bbb; border: 1px solid #a2a2a2; } .down { border-top-color: #444; margin-top: auto; margin-bottom: 2px; }

/* taskbar */
.taskbar { position: relative; height: 40px; flex: none; display: flex; align-items: center; color: #fff; }
.taskbar > * { position: relative; flex: none; }
.taskbar .wall { position: absolute; left: 0; top: 0; width: 1366px; height: 40px; }
.start { width: 27px; height: 26px; margin: -1px 14px 0 12px; }
.app { width: 58px; height: 39px; margin-right: 4px; display: flex; align-items: center; justify-content: center; border: 1px solid transparent; }
.start + .app { margin-left: -1px; }
.app svg { width: 32px; height: 32px; margin-top: -2px; }
.open { background: rgba(255,255,255,.18); border-color: rgba(255,255,255,.4); }
.stack { box-shadow: inset -5px 0 0 -1px rgba(70,50,40,.25); }
.current { background: rgba(255,255,255,.4); border-color: #f5f0ec; }
.help { width: 31px; height: 31px; margin: 0 14px 0 223px; }
.tray { width: 110px; height: 20px; }
.lang, .clock { display: flex; flex-direction: column; align-items: center; font: 12px/17px "Open Sans", sans-serif; letter-spacing: -.4px; }
.lang { margin-left: 13px; } .clock { margin-left: 16px; }
.fz { font: italic bold 20px "Liberation Sans", sans-serif; fill: #fff; }
.word { font: bold 20px "Liberation Serif", serif; fill: #1f4f9f; }
.q { font: bold 30px "Liberation Sans", sans-serif; fill: #fff; text-anchor: middle; }
```
